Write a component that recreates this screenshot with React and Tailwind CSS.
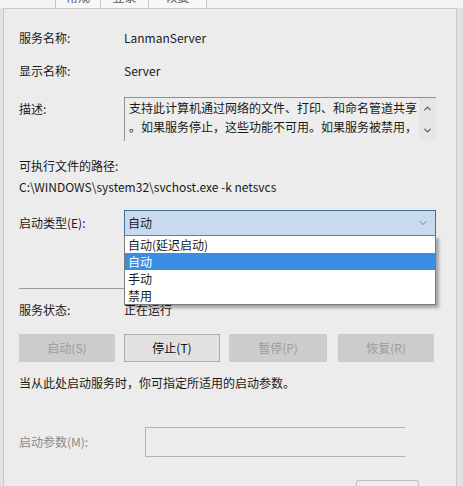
import { ChevronDown, ChevronUp } from "lucide-react";

const font = "font-['Segoe_UI','Noto_Sans_CJK_SC','Noto_Sans',sans-serif]";

function Tab({ label, w }) {
    return (
        <div className={`h-[8px] overflow-hidden border-r border-[#c8c8c8] bg-[#f7f7f7] ${w}`}>
            <div className="-mt-[11px] text-center text-[12px] leading-[16px] text-[#555]">{label}</div>
        </div>
    );
}

function Btn({ label, enabled, w }) {
    return (
        <div
            className={`flex h-[28px] items-center justify-center text-[12px] ${w} ${
                enabled ? "border border-[#adadad] bg-[#e1e1e1] text-[#111]" : "bg-[#cccccc] text-[#9c9c9c]"
            }`}
        >
            {label}
        </div>
    );
}

export default function App() {
    return (
        <div className={`relative h-[486px] w-[463px] overflow-hidden bg-[#e2e2e2] ${font}`}>
            {/* tabs strip */}
            <div className="flex h-[8px] bg-[#f3f3f3] pl-[55px]">
                <div className="flex border-l border-[#c8c8c8]">
                    <Tab label="常规" w="w-[45px]" />
                    <Tab label="登录" w="w-[48px]" />
                    <Tab label="恢复" w="w-[58px]" />
                </div>
            </div>

            {/* frame */}
            <div className="ml-[3px] mr-[6px] h-[478px] border-l border-r border-t border-[#c9c9c9] bg-[#ececec] pl-[15px] text-[12px] text-[#1a1a1a]">
                <div className="h-[19px]" />
                <div className="flex h-[20px] items-center">
                    <div className="w-[105px]">服务名称:</div>
                    <div>LanmanServer</div>
                </div>
                <div className="h-[13px]" />
                <div className="flex h-[20px] items-center">
                    <div className="w-[105px]">显示名称:</div>
                    <div>Server</div>
                </div>
                <div className="h-[16px]" />
                <div className="flex h-[44px]">
                    <div className="w-[105px] pt-[3px]">描述:</div>
                    <div className="flex w-[312px] border-l border-t border-[#8f8f8f] bg-[#ededed]">
                        <div className="flex-1 pl-[4px] leading-[19px]">
                            <div>支持此计算机通过网络的文件、打印、和命名管道共享</div>
                            <div>。如果服务停止，这些功能不可用。如果服务被禁用，</div>
                        </div>
                        <div className="flex w-[17px] flex-col items-center justify-between bg-[#e6e6e6] py-[5px] text-[#555]">
                            <ChevronUp size={11} strokeWidth={2.5} />
                            <ChevronDown size={11} strokeWidth={2.5} />
                        </div>
                    </div>
                </div>
                <div className="h-[16px]" />
                <div className="flex h-[18px] items-center">可执行文件的路径:</div>
                <div className="h-[3px]" />
                <div className="flex h-[18px] items-center">C:\WINDOWS\system32\svchost.exe -k netsvcs</div>
                <div className="h-[14px]" />
                <div className="flex h-[26px] items-center">
                    <div className="w-[105px]">启动类型(E):</div>
                    <div className="flex h-[26px] w-[312px] items-center justify-between border border-[#3d6f98] bg-[#c8dbee] pl-[3px] pr-[6px]">
                        <span>自动</span>
                        <ChevronDown size={12} strokeWidth={1.25} className="text-[#444]" />
                    </div>
                </div>
                <div className="h-[52px]" />
                <div className="h-px w-[417px] bg-[#9a9a9a]" />
                <div className="h-[12px]" />
                <div className="flex h-[18px] items-center">
                    <div className="w-[105px]">服务状态:</div>
                    <div>正在运行</div>
                </div>
                <div className="h-[15px]" />
                <div className="flex items-center">
                    <Btn label="启动(S)" w="w-[96px]" />
                    <div className="w-[9px]" />
                    <Btn label="停止(T)" enabled w="w-[96px]" />
                    <div className="w-[9px]" />
                    <Btn label="暂停(P)" w="w-[98px]" />
                    <div className="w-[11px]" />
                    <Btn label="恢复(R)" w="w-[96px]" />
                </div>
                <div className="h-[12px]" />
                <div className="flex h-[18px] items-center">当从此处启动服务时，你可指定所适用的启动参数。</div>
                <div className="h-[35px]" />
                <div className="flex h-[30px] items-center">
                    <div className="w-[126px] text-[#8a8a8a]">启动参数(M):</div>
                    <div className="h-[30px] w-[260px] border-l border-t border-b border-[#b3b3b3]" />
                </div>
                <div className="h-[23px]" />
                <div className="ml-[337px] h-[6px] w-[63px] rounded-t-[3px] border-l border-r border-t border-[#bdbdbd]" />
            </div>

            {/* open dropdown list */}
            <div className="absolute left-[124px] top-[235px] w-[312px] border border-[#7a7a7a] bg-white text-[12px] leading-[17px] text-[#1a1a1a] shadow-[3px_3px_3px_rgba(0,0,0,0.3)]">
                <div className="pl-[3px]">自动(延迟启动)</div>
                <div className="bg-[#3a8ee2] pl-[3px] text-white">自动</div>
                <div className="pl-[3px]">手动</div>
                <div className="pl-[3px]">禁用</div>
            </div>
        </div>
    );
}
